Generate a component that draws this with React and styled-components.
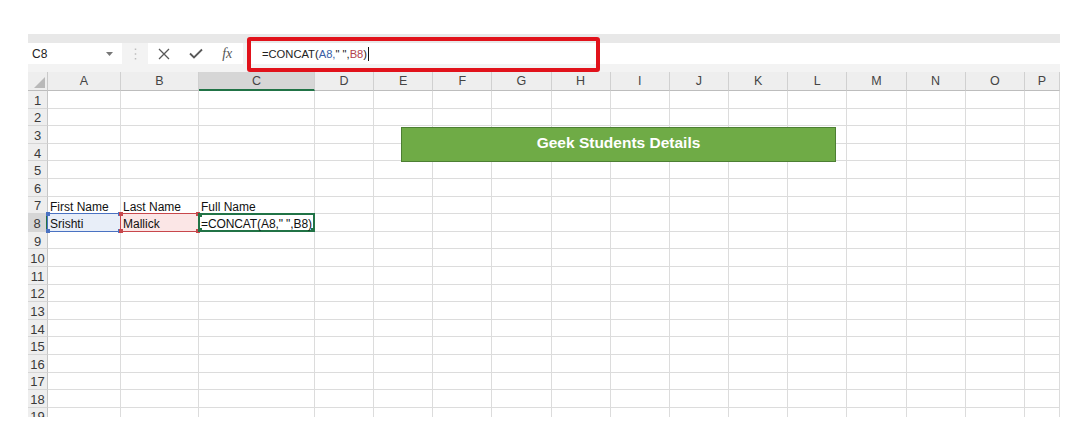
import React from 'react'
import styled, { createGlobalStyle } from 'styled-components'

const GlobalStyle = createGlobalStyle`
  html, body {
    margin: 0;
    padding: 0;
    background: #fff;
  }
  body {
    font-family: 'Liberation Sans', Arial, sans-serif;
  }
`

const COLUMNS = ['A', 'B', 'C', 'D', 'E', 'F', 'G', 'H', 'I', 'J', 'K', 'L', 'M', 'N', 'O', 'P']
const ROW_COUNT = 19

const REF = {
  blue:  { line: '#4a72c2', fill: '#e8eef8' },
  red:   { line: '#c8474c', fill: '#fbe6e6' },
  green: { line: '#217346', fill: 'transparent' },
}

const cells = {
  A7: { text: 'First Name' },
  B7: { text: 'Last Name' },
  C7: { text: 'Full Name' },
  A8: { text: 'Srishti', ref: 'blue' },
  B8: { text: 'Mallick', ref: 'red' },
  C8: { text: '=CONCAT(A8," ",B8)', ref: 'green' },
}

const Page = styled.div`
  width: 1090px;
  height: 445px;
  overflow: hidden;
  background: #fff;
  padding: 34px 0 0 28px;
  box-sizing: border-box;
`

const Sheet = styled.div`
  position: relative;
  width: 1032px;
`

const TopStrip = styled.div`
  height: 9px;
  background: #e8e8e8;
`

const FormulaRow = styled.div`
  display: flex;
  align-items: flex-start;
  height: 29px;
  background: #f3f3f3;
`

const NameBox = styled.div`
  width: 94px;
  height: 21px;
  box-sizing: border-box;
  padding: 0 9px 0 4px;
  background: #fff;
  display: flex;
  align-items: center;
  justify-content: space-between;
  font-size: 12px;
  color: #222;
`

const Grip = styled.div`
  width: 26px;
  height: 21px;
  display: flex;
  align-items: center;
  justify-content: center;
`

const ActionBox = styled.div`
  width: 95px;
  height: 21px;
  background: #fff;
  display: flex;
  align-items: center;
  margin-right: 4px;
`

const Action = styled.span`
  width: 33px;
  display: flex;
  justify-content: center;
  align-items: center;
  color: #555;
`

const Fx = styled.span`
  font-family: 'Liberation Serif', 'Times New Roman', serif;
  font-style: italic;
  font-size: 14px;
  color: #555;
`

const FormulaInput = styled.div`
  flex: 1;
  height: 21px;
  background: #fff;
  padding-left: 15px;
  display: flex;
  align-items: center;
  font-size: 11.2px;
  color: #222;
`

const Token = styled.span`
  color: ${p => p.$color || '#222'};
  white-space: pre;
`

const Caret = styled.span`
  display: inline-block;
  width: 1px;
  height: 14px;
  margin-left: 1px;
  background: #111;
`

const Annotation = styled.div`
  position: absolute;
  left: 219px;
  top: 3px;
  width: 353px;
  height: 35px;
  box-sizing: border-box;
  border: 4px solid #e1121b;
  border-radius: 3px;
`

const Grid = styled.div`
  display: grid;
  grid-template-columns: 20px 73px 78px 116px 59px repeat(11, 59.18px) 35px;
  grid-template-rows: 19px;
  grid-auto-rows: 17.6px;
  height: 345px;
  overflow: hidden;
`

const Corner = styled.div`
  position: relative;
  background: #eeeeee;
  border-right: 1px solid #c9c9c9;
  border-bottom: 1px solid #bdbdbd;
  box-sizing: border-box;
`

const CornerMark = styled.span`
  position: absolute;
  right: 2px;
  bottom: 2px;
  width: 0;
  height: 0;
  border-left: 11px solid transparent;
  border-bottom: 11px solid #b9b9b9;
`

const ColHead = styled.div`
  box-sizing: border-box;
  display: flex;
  align-items: center;
  justify-content: center;
  font-size: 12.5px;
  color: #444;
  background: ${p => (p.$active ? '#d6d6d6' : '#eeeeee')};
  border-right: 1px solid #d0d0d0;
  border-bottom: ${p => (p.$active ? '2px solid #217346' : '1px solid #bdbdbd')};
  padding-top: ${p => (p.$active ? '1px' : '0')};
`

const RowHead = styled.div`
  box-sizing: border-box;
  display: flex;
  align-items: center;
  justify-content: center;
  padding-top: 2px;
  font-size: 13px;
  color: #3a3a3a;
  background: ${p => (p.$active ? '#d6d6d6' : '#eeeeee')};
  border-right: ${p => (p.$active ? '2px solid #217346' : '1px solid #c6c6c6')};
  border-bottom: 1px solid #d6d6d6;
`

const Cell = styled.div`
  position: relative;
  box-sizing: border-box;
  display: flex;
  align-items: center;
  padding: 4px 0 0 2px;
  font-size: 12px;
  color: #111;
  white-space: nowrap;
  background: ${p => (p.$ref ? REF[p.$ref].fill : '#fff')};
  border-right: 1px solid #dcdcdc;
  border-bottom: 1px solid #dcdcdc;
`

const CellText = styled.span`
  position: relative;
  z-index: 2;
  letter-spacing: ${p => (p.$tight ? '-0.1px' : '0')};
`

const RefFrame = styled.span`
  position: absolute;
  z-index: 1;
  inset: -1px -1px -1px -1px;
  border: ${p => (p.$ref === 'green' ? 2 : 1)}px solid ${p => REF[p.$ref].line};
  pointer-events: none;
`

const Handle = styled.span`
  position: absolute;
  width: 4px;
  height: 4px;
  background: ${p => REF[p.$ref].line};
  ${p => (p.$top ? 'top: -2px;' : 'bottom: -2px;')}
  ${p => (p.$left ? 'left: -2px;' : 'right: -2px;')}
`

const Banner = styled.div`
  position: absolute;
  left: 373px;
  top: 93px;
  width: 435px;
  height: 35px;
  box-sizing: border-box;
  padding-bottom: 4px;
  background: #6fab46;
  border: 1px solid #4d7f33;
  display: flex;
  align-items: center;
  justify-content: center;
  font-weight: bold;
  font-size: 15.5px;
  color: #fff;
`

const CrossIcon = () => (
  <svg width="12" height="12" viewBox="0 0 12 12">
    <path d="M1 1 L11 11 M11 1 L1 11" stroke="#595959" strokeWidth="1.3" fill="none" />
  </svg>
)

const CheckIcon = () => (
  <svg width="14" height="11" viewBox="0 0 14 11">
    <path d="M1 5.5 L5 9.5 L13 1.5" stroke="#595959" strokeWidth="1.8" fill="none" />
  </svg>
)

const DropArrow = () => (
  <svg width="7" height="4" viewBox="0 0 7 4">
    <path d="M0 0 H7 L3.5 4 Z" fill="#777" />
  </svg>
)

const GripDots = () => (
  <svg width="3" height="12" viewBox="0 0 3 12">
    <rect x="0.75" y="0.5" width="1.5" height="1.5" fill="#bdbdbd" />
    <rect x="0.75" y="5.25" width="1.5" height="1.5" fill="#bdbdbd" />
    <rect x="0.75" y="10" width="1.5" height="1.5" fill="#bdbdbd" />
  </svg>
)

const renderCell = (col, row) => {
  const key = `${col}${row}`
  const data = cells[key] || {}
  const ref = data.ref
  return (
    <Cell key={key} $ref={ref}>
      {ref && (
        <RefFrame $ref={ref}>
          <Handle $ref={ref} $top $left />
          {ref !== 'green' && <Handle $ref={ref} $top />}
          <Handle $ref={ref} $left />
          <Handle $ref={ref} />
        </RefFrame>
      )}
      {data.text && <CellText $tight={ref === 'green'}>{data.text}</CellText>}
    </Cell>
  )
}

const App = () => {
  const rows = Array.from({ length: ROW_COUNT }, (_, i) => i + 1)

  return (
    <>
      <GlobalStyle />
      <Page>
        <Sheet>
          <TopStrip />
          <FormulaRow>
            <NameBox>
              <span>C8</span>
              <DropArrow />
            </NameBox>
            <Grip><GripDots /></Grip>
            <ActionBox>
              <Action><CrossIcon /></Action>
              <Action><CheckIcon /></Action>
              <Action><Fx>fx</Fx></Action>
            </ActionBox>
            <FormulaInput>
              <Token>=CONCAT(</Token>
              <Token $color="#3b5ea6">A8,</Token>
              <Token>" ",</Token>
              <Token $color="#b2434b">B8</Token>
              <Token>)</Token>
              <Caret />
            </FormulaInput>
          </FormulaRow>

          <Grid>
            <Corner><CornerMark /></Corner>
            {COLUMNS.map(col => (
              <ColHead key={col} $active={col === 'C'}>{col}</ColHead>
            ))}
            {rows.map(row => (
              <React.Fragment key={row}>
                <RowHead $active={row === 8}>{row}</RowHead>
                {COLUMNS.map(col => renderCell(col, row))}
              </React.Fragment>
            ))}
          </Grid>

          <Annotation />
          <Banner>Geek Students Details</Banner>
        </Sheet>
      </Page>
    </>
  )
}

export default App
